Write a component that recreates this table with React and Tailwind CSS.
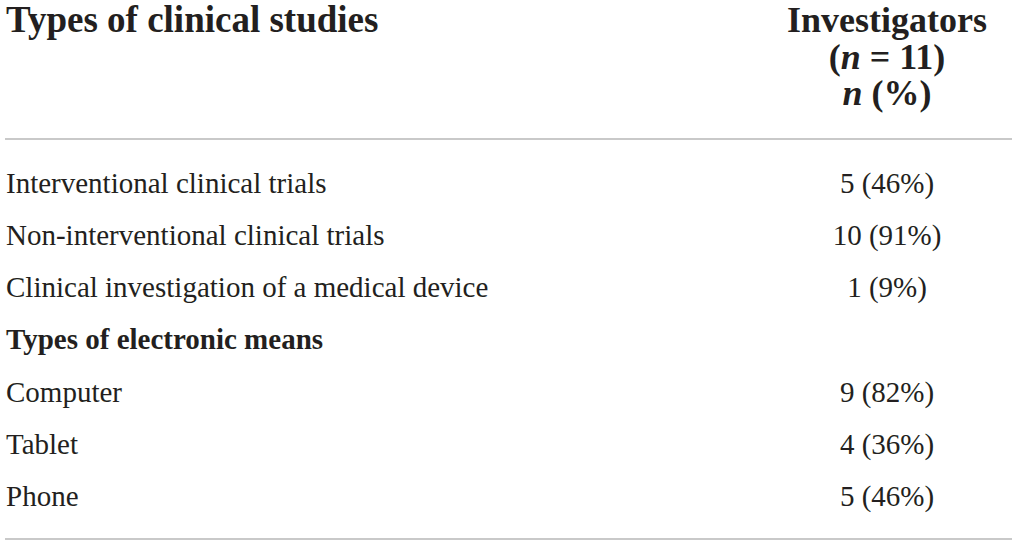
const rows = [
  { label: 'Interventional clinical trials', value: '5 (46%)' },
  { label: 'Non-interventional clinical trials', value: '10 (91%)' },
  { label: 'Clinical investigation of a medical device', value: '1 (9%)' },
  { label: 'Types of electronic means', bold: true },
  { label: 'Computer', value: '9 (82%)' },
  { label: 'Tablet', value: '4 (36%)' },
  { label: 'Phone', value: '5 (46%)' },
]

export default function App() {
  return (
    <div
      className="w-[1017px] h-[545px] bg-white text-[#231f20] pl-[5px] pr-[5px] pt-[2px]"
      style={{ fontFamily: '"Liberation Serif", "Times New Roman", serif' }}
    >
      <div className="grid grid-cols-[1fr_250px] font-bold text-[36px] leading-[36.5px] pb-[26px]">
        <div className="pl-[1px] text-[37px]">Types of clinical studies</div>
        <div className="text-center">
          <div>Investigators</div>
          <div>(<i>n</i> = 11)</div>
          <div><i>n</i> (%)</div>
        </div>
      </div>
      <div className="h-[2px] bg-[#c9c9c9]" />
      <div className="pt-[17px] pb-[15px]">
        {rows.map((r) => (
          <div
            key={r.label}
            className="grid grid-cols-[1fr_250px] text-[29px] leading-[52.3px]"
          >
            <div className={r.bold ? 'pl-[1px] font-bold' : 'pl-[1px]'}>{r.label}</div>
            <div className="text-center">{r.value}</div>
          </div>
        ))}
      </div>
      <div className="h-[2px] bg-[#c9c9c9]" />
    </div>
  )
}
